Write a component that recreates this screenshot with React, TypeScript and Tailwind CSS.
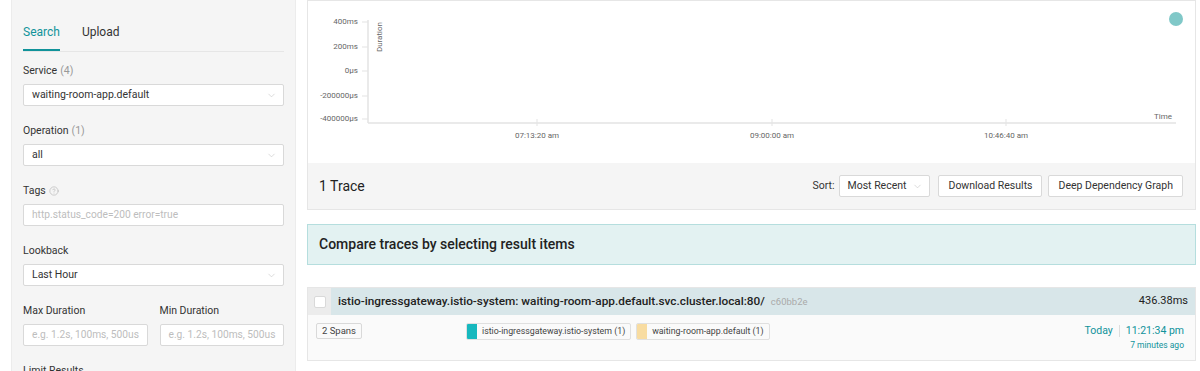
import React from 'react';
import { ChevronDown, CircleHelp } from 'lucide-react';

const TEAL = '#11939a';

function Select({ value }: { value: string }) {
  return (
    <div className="flex h-[22px] items-center justify-between whitespace-nowrap rounded-[2px] border border-[#d9d9d9] bg-white pl-[8px] pr-[6px] text-[10.5px] text-[#333]">
      <span>{value}</span>
      <ChevronDown size={11} strokeWidth={1.2} className="text-[#bfbfbf]" />
    </div>
  );
}

function Input({ placeholder }: { placeholder: string }) {
  return (
    <div className="flex h-[22px] min-w-0 items-center overflow-hidden whitespace-nowrap rounded-[2px] border border-[#d9d9d9] bg-white px-[8px] text-[10.2px] text-[#bdbdbd]">
      {placeholder}
    </div>
  );
}

function Field({ label, count, help, children }: { label: string; count?: string; help?: boolean; children?: React.ReactNode }) {
  return (
    <div className="mb-[15px]">
      <div className="mb-[5px] flex h-[18px] items-center gap-[3px] whitespace-nowrap pt-[1px] text-[10.5px] text-[#333]">
        <span>{label}</span>
        {count && <span className="text-[#999]">{count}</span>}
        {help && <CircleHelp size={10} strokeWidth={1.3} className="text-[#aaa]" />}
      </div>
      {children}
    </div>
  );
}

function Chart() {
  const yTicks = [
    { y: 21, label: '400ms' },
    { y: 46, label: '200ms' },
    { y: 70, label: '0μs' },
    { y: 95, label: '-200000μs' },
    { y: 118, label: '-400000μs' },
  ];
  const xTicks = [
    { x: 229, label: '07:13:20 am' },
    { x: 464, label: '09:00:00 am' },
    { x: 698, label: '10:46:40 am' },
  ];
  return (
    <svg width={886} height={162} className="block">
      <g fontFamily="Roboto, sans-serif" fontSize={8} fill="#666">
        {yTicks.map((t) => (
          <g key={t.label}>
            <line x1={54} x2={60} y1={t.y} y2={t.y} stroke="#e3e3e3" />
            <text x={50} y={t.y} textAnchor="end" dominantBaseline="middle">{t.label}</text>
          </g>
        ))}
        {xTicks.map((t) => (
          <g key={t.label}>
            <line x1={t.x} x2={t.x} y1={118} y2={125} stroke="#e3e3e3" />
            <text x={t.x} y={135} textAnchor="middle" dominantBaseline="middle">{t.label}</text>
          </g>
        ))}
        <text transform="translate(74, 21) rotate(-90)" textAnchor="end">Duration</text>
        <text x={864} y={116} textAnchor="end" dominantBaseline="middle">Time</text>
      </g>
      <line x1={60} x2={60} y1={19} y2={122} stroke="#e3e3e3" strokeWidth={1.5} />
      <line x1={60} x2={868} y1={122} y2={122} stroke="#e3e3e3" strokeWidth={1.5} />
      <circle cx={868} cy={18} r={7} fill="#80c8c8" />
    </svg>
  );
}

function Button({ children }: { children: React.ReactNode }) {
  return (
    <div className="flex h-[22px] items-center whitespace-nowrap rounded-[2px] border border-[#d9d9d9] bg-white px-[9px] text-[10.5px] text-[#333]">
      {children}
    </div>
  );
}

function ServiceTag({ color, name }: { color: string; name: string }) {
  return (
    <div className="flex h-[17px] items-stretch overflow-hidden rounded-[2px] border border-[#e0e0e0] bg-[#fafafa]">
      <span className="w-[10px]" style={{ background: color }} />
      <span className="flex items-center whitespace-nowrap px-[5px] text-[8.8px] text-[#444]">{name}</span>
    </div>
  );
}

export default function App() {
  return (
    <div className="flex h-[371px] overflow-hidden bg-white font-['Roboto',sans-serif]">
      <aside className="ml-[11px] w-[285px] shrink-0 border-x border-[#ececec] bg-[#f5f5f5] px-[11px] pt-[23px]">
        <div className="flex border-b border-[#e6e6e6] text-[12px]">
          <div className="mr-[22px] border-b-2 pb-[8px]" style={{ color: TEAL, borderColor: TEAL }}>Search</div>
          <div className="pb-[8px] text-[#333]">Upload</div>
        </div>
        <div className="mt-[9px]">
          <Field label="Service" count="(4)"><Select value="waiting-room-app.default" /></Field>
          <Field label="Operation" count="(1)"><Select value="all" /></Field>
          <Field label="Tags" help><Input placeholder="http.status_code=200 error=true" /></Field>
          <Field label="Lookback"><Select value="Last Hour" /></Field>
          <div className="grid grid-cols-2 gap-[12px]">
            <div className="min-w-0"><Field label="Max Duration"><Input placeholder="e.g. 1.2s, 100ms, 500us" /></Field></div>
            <div className="min-w-0"><Field label="Min Duration"><Input placeholder="e.g. 1.2s, 100ms, 500us" /></Field></div>
          </div>
          <Field label="Limit Results" />
        </div>
      </aside>

      <main className="ml-[11px] w-[889px] shrink-0">
        <section className="border border-[#e6e6e6]">
          <Chart />
          <div className="flex h-[46px] items-center justify-between bg-[#f5f5f5] pl-[11px] pr-[12px]">
            <span className="text-[14px] text-[#222]">1 Trace</span>
            <div className="flex items-center gap-[6px] text-[10.5px] text-[#333]">
              <span className="mr-[-2px]">Sort:</span>
              <div className="flex h-[22px] items-center gap-[6px] whitespace-nowrap rounded-[2px] border border-[#d9d9d9] bg-white pl-[8px] pr-[6px]">
                <span>Most Recent</span>
                <ChevronDown size={11} strokeWidth={1.2} className="shrink-0 text-[#bfbfbf]" />
              </div>
              <div className="ml-[2px]"><Button>Download Results</Button></div>
              <Button>Deep Dependency Graph</Button>
            </div>
          </div>
        </section>

        <div className="mt-[14px] flex h-[41px] items-center whitespace-nowrap border border-[#b5dede] bg-[#e3f2f2] px-[11px] text-[14px] font-medium text-[#222]">
          Compare traces by selecting result items
        </div>

        <div className="mt-[22px] border border-[#e6e6e6]">
          <div className="flex h-[27px] items-stretch bg-[#d8e6e9]">
            <div className="flex w-[23px] items-center justify-center bg-[#ececec]">
              <div className="h-[12px] w-[12px] rounded-[2px] border border-[#d9d9d9] bg-white" />
            </div>
            <div className="flex flex-1 items-center justify-between pl-[7px] pr-[7px]">
              <div className="flex items-baseline gap-[6px] whitespace-nowrap">
                <span className="text-[11.8px] font-medium text-[#222]">
                  istio-ingressgateway.istio-system: waiting-room-app.default.svc.cluster.local:80/
                </span>
                <span className="text-[9.5px] text-[#aaa]">c60bb2e</span>
              </div>
              <span className="text-[11px] text-[#222]">436.38ms</span>
            </div>
          </div>
          <div className="flex h-[45px] items-start justify-between bg-[#fafafa] pl-[8px] pr-[11px] pt-[8px]">
            <div className="flex items-start">
              <div className="flex h-[16px] items-center whitespace-nowrap rounded-[2px] border border-[#d9d9d9] bg-[#fafafa] px-[5px] text-[9.5px] text-[#444]">
                2 Spans
              </div>
              <div className="ml-[104px] flex gap-[5px]">
                <ServiceTag color="#17b8be" name="istio-ingressgateway.istio-system (1)" />
                <ServiceTag color="#f8dca1" name="waiting-room-app.default (1)" />
              </div>
            </div>
            <div className="flex flex-col items-end whitespace-nowrap" style={{ color: TEAL }}>
              <div className="flex items-center text-[10.5px]">
                <span>Today</span>
                <span className="mx-[6px] h-[12px] w-px bg-[#ddd]" />
                <span>11:21:34 pm</span>
              </div>
              <span className="text-[8.5px]">7 minutes ago</span>
            </div>
          </div>
        </div>
      </main>
    </div>
  );
}
